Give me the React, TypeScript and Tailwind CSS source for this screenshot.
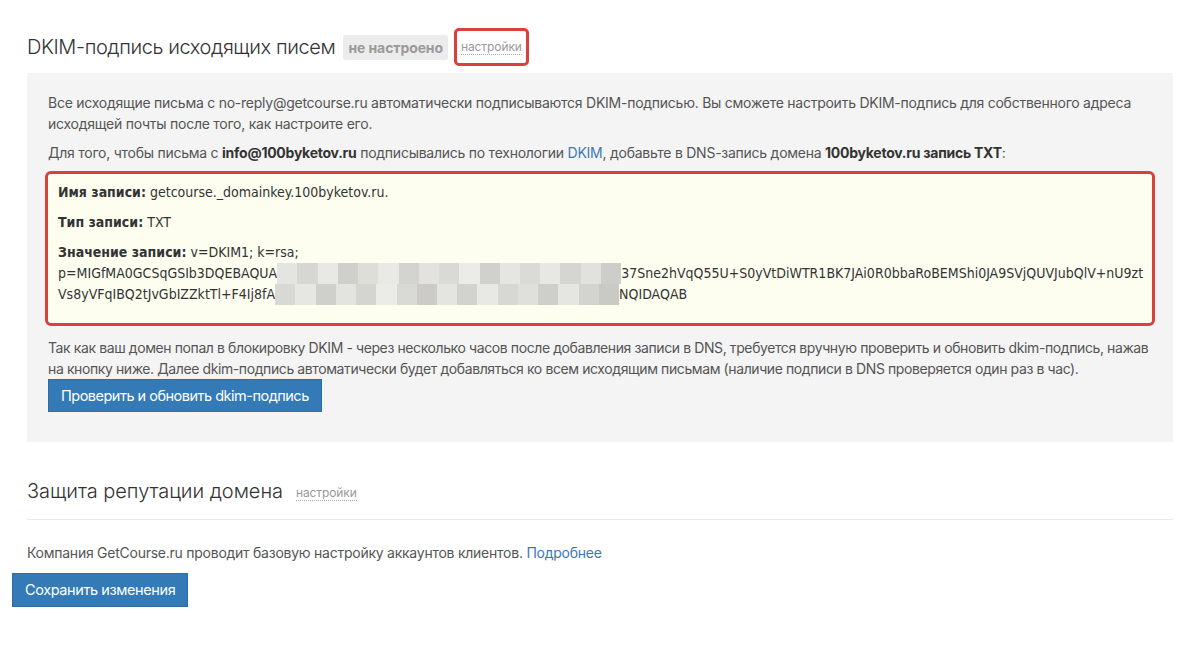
import React from 'react';

const blurTop = ['#e4e4e0', '#d6d6d2', '#e8e8e4', '#cfcfcb', '#deded9', '#e9e9e5', '#d3d3cf', '#e2e2de', '#d9d9d5', '#ebebe7', '#d0d0cc', '#e5e5e1', '#dadad6', '#e7e7e3', '#d5d5d1', '#e1e1dd', '#cdcdc9'];
const blurBottom = ['#d8d8d4', '#e6e6e2', '#cfcfcb', '#e3e3df', '#d4d4d0', '#ebebe7', '#d9d9d5', '#cccbc7', '#e4e4e0', '#d2d2ce', '#e8e8e4', '#d7d7d3', '#dfdfdb', '#cececa', '#e5e5e1', '#d3d3cf', '#c9c9c5'];

// blurred part of the key
const Mosaic: React.FC<{ cells: string[] }> = ({ cells }) => (
  <span className="inline-block h-[21px] w-[344px] shrink-0 align-top">
    <span className="flex h-full w-full">
      {cells.map((c, i) => (
        <span key={i} className="h-full w-[20.25px]" style={{ backgroundColor: c }} />
      ))}
    </span>
  </span>
);

export default function App() {
  return (
    <div className="min-h-[664px] w-[1200px] bg-white font-['Inter',sans-serif] tracking-[-0.25px] text-[#555]">
      <div className="px-[27px] pt-[28px]">
        {/* DKIM section header */}
        <div className="flex h-[38px] items-center">
          <h2 className="text-[20px] font-light tracking-[-0.4px] text-[#333]">DKIM-подпись исходящих писем</h2>
          <span className="ml-[8px] rounded-[2px] bg-[#ececec] px-[5px] py-[2px] text-[14px] font-bold tracking-[-0.1px] text-[#9a9a9a]">не настроено</span>
          <span className="ml-[6px] flex h-[38px] items-center rounded-[5px] border-[3px] border-[#d9413f] px-[4px]">
            <span className="border-b border-dotted border-[#aaa] text-[12px] leading-[15px] tracking-[-0.1px] text-[#999]">настройки</span>
          </span>
        </div>

        {/* Grey panel */}
        <div className="mt-[7px] bg-[#f4f4f4] pb-[30px] pl-[21px] pr-[14px] pt-[19px] text-[14px] leading-[21px]">
          <p className="pr-[7px]">
            Все исходящие письма с no-reply@getcourse.ru автоматически подписываются DKIM-подписью. Вы сможете настроить DKIM-подпись для собственного адреса исходящей почты после того, как настроите его.
          </p>
          <p className="mt-[8px]">
            Для того, чтобы письма с <b className="text-[#333]">info@100byketov.ru</b> подписывались по технологии{' '}
            <span className="text-[#3c79b4]">DKIM</span>, добавьте в DNS-запись домена{' '}
            <b className="text-[#333]">100byketov.ru запись TXT</b>:
          </p>

          {/* DNS record box */}
          <div className="-ml-[3px] mt-[8px] w-[1110px] rounded-[6px] border-[3px] border-[#d9413f] bg-[#fefef0] px-[10px] pb-[18px] pt-[8px] font-['DejaVu_Sans_Condensed','DejaVu_Sans',sans-serif] text-[14px] leading-[21px] tracking-[0px] text-[#333]">
            <p><b>Имя записи:</b> getcourse._domainkey.100byketov.ru.</p>
            <p className="mt-[9px]"><b>Тип записи:</b> TXT</p>
            <p className="mt-[9px]"><b>Значение записи:</b> v=DKIM1; k=rsa;</p>
            <p className="whitespace-nowrap">
              p=MIGfMA0GCSqGSIb3DQEBAQUA
              <Mosaic cells={blurTop} />
              37Sne2hVqQ55U+S0yVtDiWTR1BK7JAi0R0bbaRoBEMShi0JA9SVjQUVJubQlV+nU9zt
            </p>
            <p className="whitespace-nowrap">
              Vs8yVFqIBQ2tJvGbIZZktTl+F4Ij8fA
              <Mosaic cells={blurBottom} />
              NQIDAQAB
            </p>
          </div>

          <p className="mt-[11px] tracking-[-0.4px]">
            Так как ваш домен попал в блокировку DKIM - через несколько часов после добавления записи в DNS, требуется вручную проверить и обновить dkim-подпись, нажав на кнопку ниже. Далее dkim-подпись автоматически будет добавляться ко всем исходящим письмам (наличие подписи в DNS проверяется один раз в час).
          </p>
          <button className="h-[33px] border border-[#2e6da4] bg-[#337ab7] px-[12px] text-[14.5px] tracking-[-0.5px] text-white">
            Проверить и обновить dkim-подпись
          </button>
        </div>

        {/* Reputation section */}
        <div className="mt-[34px] flex items-center">
          <h2 className="text-[20px] font-light tracking-[-0.05px] text-[#333]">Защита репутации домена</h2>
          <span className="ml-[13px] mt-[3px] border-b border-dotted border-[#aaa] text-[12px] leading-[15px] tracking-[-0.1px] text-[#999]">настройки</span>
        </div>
        <div className="mt-[13px] border-t border-[#eaeaea]" />
        <p className="mt-[22px] text-[14px] leading-[21px]">
          Компания GetCourse.ru проводит базовую настройку аккаунтов клиентов.{' '}
          <span className="text-[#3c79b4]">Подробнее</span>
        </p>
      </div>
      <div className="px-[12px] pt-[10px]">
        <button className="h-[34px] border border-[#2e6da4] bg-[#337ab7] px-[12px] text-[14.5px] tracking-[-0.4px] text-white">
          Сохранить изменения
        </button>
      </div>
    </div>
  );
}
